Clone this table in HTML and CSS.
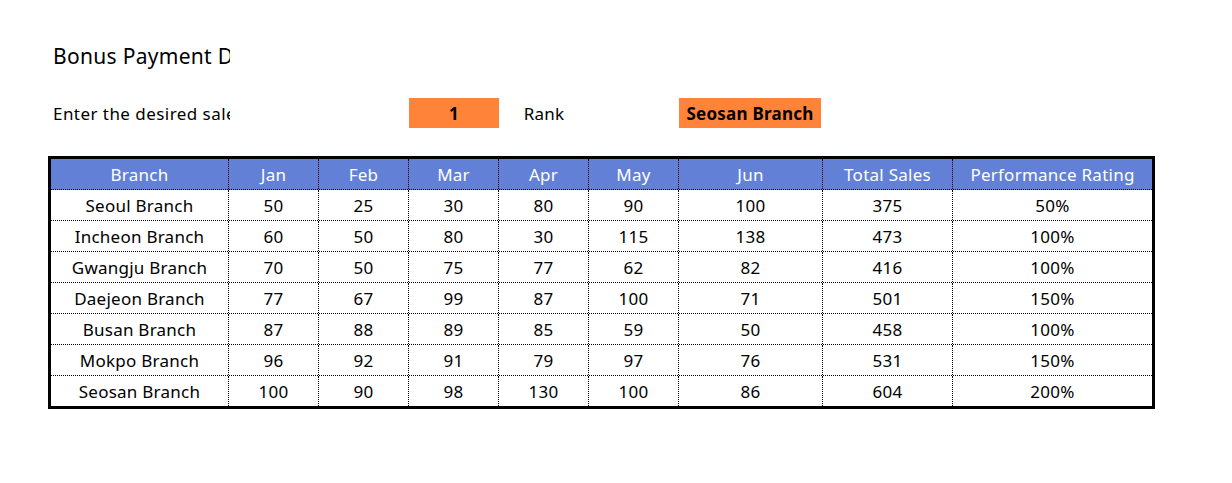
FILE: index.html
```html
<!DOCTYPE html>
<html>
<head>
<meta charset="utf-8">
<link rel="stylesheet" href="styles.css">
</head>
<body>
<div class="sheet">
  <div class="title-row">
    <div class="title">Bonus Payment D</div>
  </div>
  <div class="input-row">
    <div class="prompt">Enter the desired sale</div>
    <div class="gap-b"></div>
    <div class="rank-input">1</div>
    <div class="rank-label">Rank</div>
    <div class="gap-f"></div>
    <div class="result">Seosan Branch</div>
  </div>
  <div class="table">
    <div class="row head">
      <div class="c ca">Branch</div><div class="c cm">Jan</div><div class="c cm">Feb</div><div class="c cm">Mar</div><div class="c cm">Apr</div><div class="c cm">May</div><div class="c cg">Jun</div><div class="c ch">Total Sales</div><div class="c ci">Performance Rating</div>
    </div>
    <div class="row">
      <div class="c ca">Seoul Branch</div><div class="c cm">50</div><div class="c cm">25</div><div class="c cm">30</div><div class="c cm">80</div><div class="c cm">90</div><div class="c cg">100</div><div class="c ch">375</div><div class="c ci">50%</div>
    </div>
    <div class="row">
      <div class="c ca">Incheon Branch</div><div class="c cm">60</div><div class="c cm">50</div><div class="c cm">80</div><div class="c cm">30</div><div class="c cm">115</div><div class="c cg">138</div><div class="c ch">473</div><div class="c ci">100%</div>
    </div>
    <div class="row">
      <div class="c ca">Gwangju Branch</div><div class="c cm">70</div><div class="c cm">50</div><div class="c cm">75</div><div class="c cm">77</div><div class="c cm">62</div><div class="c cg">82</div><div class="c ch">416</div><div class="c ci">100%</div>
    </div>
    <div class="row">
      <div class="c ca">Daejeon Branch</div><div class="c cm">77</div><div class="c cm">67</div><div class="c cm">99</div><div class="c cm">87</div><div class="c cm">100</div><div class="c cg">71</div><div class="c ch">501</div><div class="c ci">150%</div>
    </div>
    <div class="row">
      <div class="c ca">Busan Branch</div><div class="c cm">87</div><div class="c cm">88</div><div class="c cm">89</div><div class="c cm">85</div><div class="c cm">59</div><div class="c cg">50</div><div class="c ch">458</div><div class="c ci">100%</div>
    </div>
    <div class="row">
      <div class="c ca">Mokpo Branch</div><div class="c cm">96</div><div class="c cm">92</div><div class="c cm">91</div><div class="c cm">79</div><div class="c cm">97</div><div class="c cg">76</div><div class="c ch">531</div><div class="c ci">150%</div>
    </div>
    <div class="row last">
      <div class="c ca">Seosan Branch</div><div class="c cm">100</div><div class="c cm">90</div><div class="c cm">98</div><div class="c cm">130</div><div class="c cm">100</div><div class="c cg">86</div><div class="c ch">604</div><div class="c ci">200%</div>
    </div>
  </div>
</div>
</body>
</html>
```
FILE: styles.css
```css
html, body {
  margin: 0;
  padding: 0;
  background: #ffffff;
}

.sheet {
  padding-left: 48px;
  font-family: "Noto Sans", "Noto Sans CJK KR", sans-serif;
  font-size: 17px;
  letter-spacing: 0.25px;
  color: #000000;
}

.title-row {
  height: 98px;
  display: flex;
  flex-direction: column;
}

.title {
  margin-top: 41px;
  width: 177px;
  padding-left: 5px;
  height: 30px;
  line-height: 30px;
  font-size: 21px;
  letter-spacing: 0.3px;
  white-space: nowrap;
  overflow: hidden;
}

.input-row {
  display: flex;
  height: 30px;
  align-items: stretch;
  line-height: 32px;
}

.prompt {
  width: 177px;
  padding-left: 5px;
  letter-spacing: 0.45px;
  white-space: nowrap;
  overflow: hidden;
}

.gap-b {
  width: 179px;
}

.rank-input {
  width: 90px;
  background: #ff843a;
  text-align: center;
  font-weight: bold;
}

.rank-label {
  width: 90px;
  text-align: center;
}

.gap-f {
  width: 90px;
}

.result {
  width: 142px;
  background: #ff843a;
  text-align: center;
  font-weight: bold;
}

.table {
  margin-top: 28px;
  width: 1101px;
  border: 3px solid #000000;
}

.row {
  display: flex;
  height: 30px;
  border-bottom: 1px dotted #000000;
}

.row.last {
  border-bottom: none;
}

.row.head {
  background: #6281d6;
  color: #ffffff;
}

.c {
  box-sizing: border-box;
  border-right: 1px dotted #000000;
  text-align: center;
  line-height: 32px;
  white-space: nowrap;
}

.ca { width: 178px; }
.cm { width: 90px; }
.cg { width: 144px; }
.ch { width: 130px; }
.ci { width: 199px; border-right: none; }
```
